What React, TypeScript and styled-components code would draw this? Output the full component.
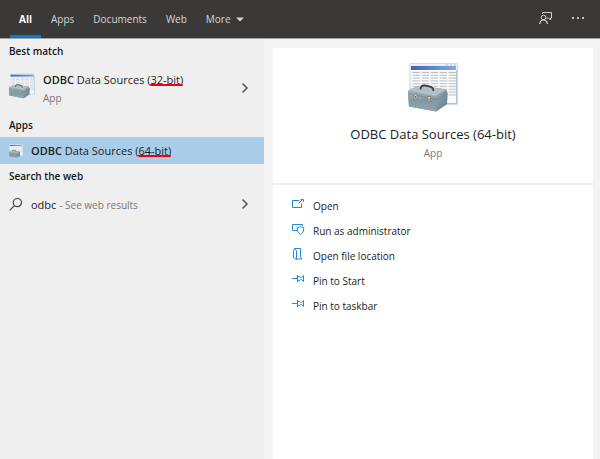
import React from "react";
import styled, { createGlobalStyle } from "styled-components";

const GlobalStyle = createGlobalStyle`
  * { box-sizing: border-box; }
  body {
    margin: 0;
    background: #f4f4f4;
    color: #1c1c1c;
    font-family: "Open Sans", "Noto Sans", sans-serif;
    font-size: 10px;
  }
  button { font: inherit; color: inherit; border: 0; padding: 0; background: none; text-align: left; }
  h1, h2, p { margin: 0; }
  svg { display: block; flex: none; }
`;

const Page = styled.div`
  min-height: 100vh;
  display: flex;
  flex-direction: column;
`;

const Header = styled.header`
  height: 39px;
  display: flex;
  justify-content: space-between;
  background: #3a3938;
  border-bottom: 1px solid #a5a3a2;
  color: #d6d6d6;
`;

const Tabs = styled.nav`
  display: flex;
  gap: 1px;
  padding-left: 10px;
`;

const Tab = styled.button<{ $active?: boolean }>`
  display: flex;
  align-items: center;
  gap: 5px;
  padding: 0 9px;
  font-size: 10px;
  line-height: 16px;
  font-weight: ${(p) => (p.$active ? 700 : 400)};
  color: ${(p) => (p.$active ? "#ffffff" : "inherit")};
  border-top: 3px solid transparent;
  border-bottom: 3px solid ${(p) => (p.$active ? "#0a78d6" : "transparent")};
`;

const HeaderActions = styled.div`
  display: flex;
  align-items: center;
  gap: 19px;
  padding: 0 16px 3px 0;
`;

const Columns = styled.main`
  flex: 1;
  display: grid;
  grid-template-columns: 44% 1fr;
`;

const Results = styled.section`
  background: #efefef;
`;

const GroupTitle = styled.h2`
  padding: 4px 9px;
  font-size: 10px;
  line-height: 16px;
  font-weight: 600;
  color: #151515;
`;

const Result = styled.button<{ $size: "large" | "small" | "medium"; $selected?: boolean }>`
  display: flex;
  align-items: center;
  width: 100%;
  height: ${(p) => ({ large: 50, medium: 32, small: 27 })[p.$size]}px;
  gap: 8px;
  padding: 0 14px 0 9px;
  background: ${(p) => (p.$selected ? "#a9cce9" : "transparent")};
`;

const AppIcon = styled.span`
  padding-bottom: 5px;
`;

const ResultText = styled.span`
  flex: 1;
  display: flex;
  flex-direction: column;
  gap: 2px;
`;

const ResultName = styled.span`
  font-size: 11px;
  line-height: 17px;
  white-space: nowrap;
  b { font-weight: 600; }
`;

const Muted = styled.span`
  font-size: 10px;
  line-height: 16px;
  color: #777777;
`;

const Marked = styled.span`
  position: relative;
  &::after {
    content: "";
    position: absolute;
    left: 0;
    right: 0;
    bottom: 1px;
    height: 2px;
    border-radius: 1px;
    background: #f4000c;
  }
`;

const Preview = styled.section`
  margin: 9px 7px 0 9px;
  background: #ffffff;
`;

const Summary = styled.div`
  display: flex;
  flex-direction: column;
  align-items: center;
  height: 137px;
  padding-top: 15px;
  border-bottom: 2px solid #eeeeee;
`;

const AppTitle = styled.h1`
  margin: 11px 0 1px;
  font-size: 13px;
  line-height: 20px;
  font-weight: 400;
`;

const Actions = styled.ul`
  list-style: none;
  margin: 0;
  padding: 8px 19px;
`;

const Action = styled.button`
  display: flex;
  align-items: center;
  gap: 7px;
  width: 100%;
  height: 25px;
  font-size: 10px;
  line-height: 16px;
`;

const xs = [0, 1, 2, 3, 4];
const ys = [0, 1, 2, 3, 4, 5, 6, 7, 8];

function ToolboxIcon({ size }: { size: number }) {
  const id = `toolbox${size}`;
  return (
    <svg width={size} height={size} viewBox="0 0 50 50" aria-hidden="true">
      <defs>
        <linearGradient id={`${id}-bar`} x1="0" y1="0" x2="1" y2="0">
          <stop offset="0" stopColor="#3d66b5" />
          <stop offset="1" stopColor="#83a8dc" />
        </linearGradient>
        <linearGradient id={`${id}-front`} x1="0" y1="0" x2="0" y2="1">
          <stop offset="0" stopColor="#a5b6be" />
          <stop offset="0.5" stopColor="#809aa4" />
          <stop offset="1" stopColor="#91a6ad" />
        </linearGradient>
        <linearGradient id={`${id}-side`} x1="0" y1="0" x2="1" y2="1">
          <stop offset="0" stopColor="#9bb0b8" />
          <stop offset="1" stopColor="#5d7883" />
        </linearGradient>
      </defs>
      <path d="M2 0.5H49.5V41.5H2Z" fill="#edf0f5" stroke="#d3dae6" />
      <path d="M37.5 2H40M42 2H44M46 2H48" stroke="#b4c1d2" />
      <path d="M3.5 3H48V40H3.5Z" fill="#fbfcfd" />
      <path d="M3 3H48V7H3Z" fill={`url(#${id}-bar)`} />
      {xs.map((x) =>
        ys.map((y) => (
          <path
            key={`${x}-${y}`}
            d={`M${4.5 + x * 9} ${9.5 + y * 2.8}h7.5`}
            stroke={y === 0 ? "#b5bfcc" : "#c8cacc"}
            strokeWidth="1.3"
          />
        ))
      )}
      <path d="M48.5 7V40.5H39" stroke="#adc1df" fill="none" />
      <path d="M0 29L1 26.5L13 22.5L38 26.5L39.5 30L39 41L28 48.5L1 43.5Z" fill="#78929c" />
      <path d="M1 26.5L13 22.5L38 26.5L27 32.5Z" fill="#afc0c7" />
      <path d="M1 26.5L27 32.5L28 48.5L1 43.5L0 30Z" fill={`url(#${id}-front)`} />
      <path d="M27 32.5L38 26.5L39.5 30L39 41L28 48.5Z" fill={`url(#${id}-side)`} />
      <path d="M0.5 30.5L28 36.5L39.5 31" stroke="#688590" strokeWidth="0.7" fill="none" />
      <path d="M1 26.5L27 32.5L38 26.5" stroke="#c6d3d8" strokeWidth="0.7" fill="none" />
      <path d="M12.5 26.5C12.8 23 14.5 22 18 22.6C23 23.3 25.3 24.3 25.5 28" stroke="#35393b" strokeWidth="1.7" fill="none" />
      <path d="M6 31h3v5h-3zM19.5 33.5h3v5h-3z" fill="#d1d3d1" stroke="#766d68" strokeWidth="0.7" />
      <path d="M7.5 33v2M21 35.5v2" stroke="#8c5a4b" />
    </svg>
  );
}

const Chevron = () => (
  <svg width="10" height="12" viewBox="0 0 10 12" aria-hidden="true">
    <path d="M2.5 1.5L7 6L2.5 10.5" fill="none" stroke="#555555" strokeWidth="1.5" />
  </svg>
);

const SearchIcon = () => (
  <svg width="14" height="15" viewBox="0 0 14 15" aria-hidden="true">
    <circle cx="8.4" cy="5.6" r="4.1" fill="none" stroke="#444444" strokeWidth="1.2" />
    <path d="M5.4 8.7L0.7 13.4" stroke="#444444" strokeWidth="1.2" />
  </svg>
);

const FeedbackIcon = () => (
  <svg width="14" height="14" viewBox="0 0 14 14" fill="none" stroke="#d2d2d2" aria-hidden="true">
    <path d="M3.5 3V1.5H12.5V7H11.5V9L9.5 7H7.5" />
    <circle cx="4.5" cy="6.5" r="2.3" />
    <path d="M0.8 13C1 10.4 2.4 9 4.5 9S8 10.4 8.5 13" strokeWidth="1.2" />
  </svg>
);

const MoreIcon = () => (
  <svg width="12" height="4" viewBox="0 0 12 4" fill="#c2c2c2" aria-hidden="true">
    <path d="M0 1h2v2H0zM5 1h2v2H5zM10 1h2v2h-2z" />
  </svg>
);

const CaretIcon = () => (
  <svg width="8" height="5" viewBox="0 0 8 5" fill="#d6d6d6" aria-hidden="true">
    <path d="M0 0.5h8L4 4.5z" />
  </svg>
);

const ActionSvg = ({ children }: { children: React.ReactNode }) => (
  <svg width="14" height="17" viewBox="0 0 14 17" fill="none" stroke="#2488d8" aria-hidden="true">
    {children}
  </svg>
);

const pin = (
  <ActionSvg>
    <path d="M0 6.5H5M5.5 3V10M5.5 4.5H7.5L8.5 5.5H9.5L11.5 3.5V9.5L9.5 7.5H8.5L7.5 8.5H5.5" />
  </ActionSvg>
);

const actions = [
  {
    label: "Open",
    icon: (
      <ActionSvg>
        <path d="M7.5 3.5H0.5V10.5H9.5V6.5M6.5 6.5L10.5 2.5M8.5 2.5H11.5V5" />
      </ActionSvg>
    ),
  },
  {
    label: "Run as administrator",
    icon: (
      <ActionSvg>
        <path d="M5 8.5H0.5V2.5H10.5V4M8.5 4.5Q7 5.5 5.3 5.5C5.1 9.5 6 11 8.5 12.3C11 11 11.9 9.5 11.7 5.5Q10 5.5 8.5 4.5Z" />
      </ActionSvg>
    ),
  },
  {
    label: "Open file location",
    icon: (
      <ActionSvg>
        <path d="M2.5 1.5H8.5V10L10 12H4.5M1.5 3.5L2.5 1.5L4.5 4V12.5L1.5 10.5Z" />
      </ActionSvg>
    ),
  },
  { label: "Pin to Start", icon: pin },
  { label: "Pin to taskbar", icon: pin },
];

export default function App() {
  return (
    <Page>
      <GlobalStyle />
      <Header>
        <Tabs>
          <Tab $active>All</Tab>
          <Tab>Apps</Tab>
          <Tab>Documents</Tab>
          <Tab>Web</Tab>
          <Tab>More <CaretIcon /></Tab>
        </Tabs>
        <HeaderActions>
          <button aria-label="Feedback"><FeedbackIcon /></button>
          <button aria-label="Options"><MoreIcon /></button>
        </HeaderActions>
      </Header>
      <Columns>
        <Results>
          <GroupTitle>Best match</GroupTitle>
          <Result $size="large">
            <AppIcon><ToolboxIcon size={26} /></AppIcon>
            <ResultText>
              <ResultName><b>ODBC</b> Data Sources (<Marked>32-bit)</Marked></ResultName>
              <Muted>App</Muted>
            </ResultText>
            <Chevron />
          </Result>
          <GroupTitle>Apps</GroupTitle>
          <Result $size="small" $selected>
            <ToolboxIcon size={14} />
            <ResultText>
              <ResultName><b>ODBC</b> Data Sources (<Marked>64-bit)</Marked></ResultName>
            </ResultText>
          </Result>
          <GroupTitle>Search the web</GroupTitle>
          <Result $size="medium">
            <SearchIcon />
            <ResultText>
              <ResultName>odbc <Muted>- See web results</Muted></ResultName>
            </ResultText>
            <Chevron />
          </Result>
        </Results>
        <Preview>
          <Summary>
            <ToolboxIcon size={50} />
            <AppTitle>ODBC Data Sources (64-bit)</AppTitle>
            <Muted>App</Muted>
          </Summary>
          <Actions>
            {actions.map((a) => (
              <li key={a.label}>
                <Action>{a.icon}{a.label}</Action>
              </li>
            ))}
          </Actions>
        </Preview>
      </Columns>
    </Page>
  );
}
